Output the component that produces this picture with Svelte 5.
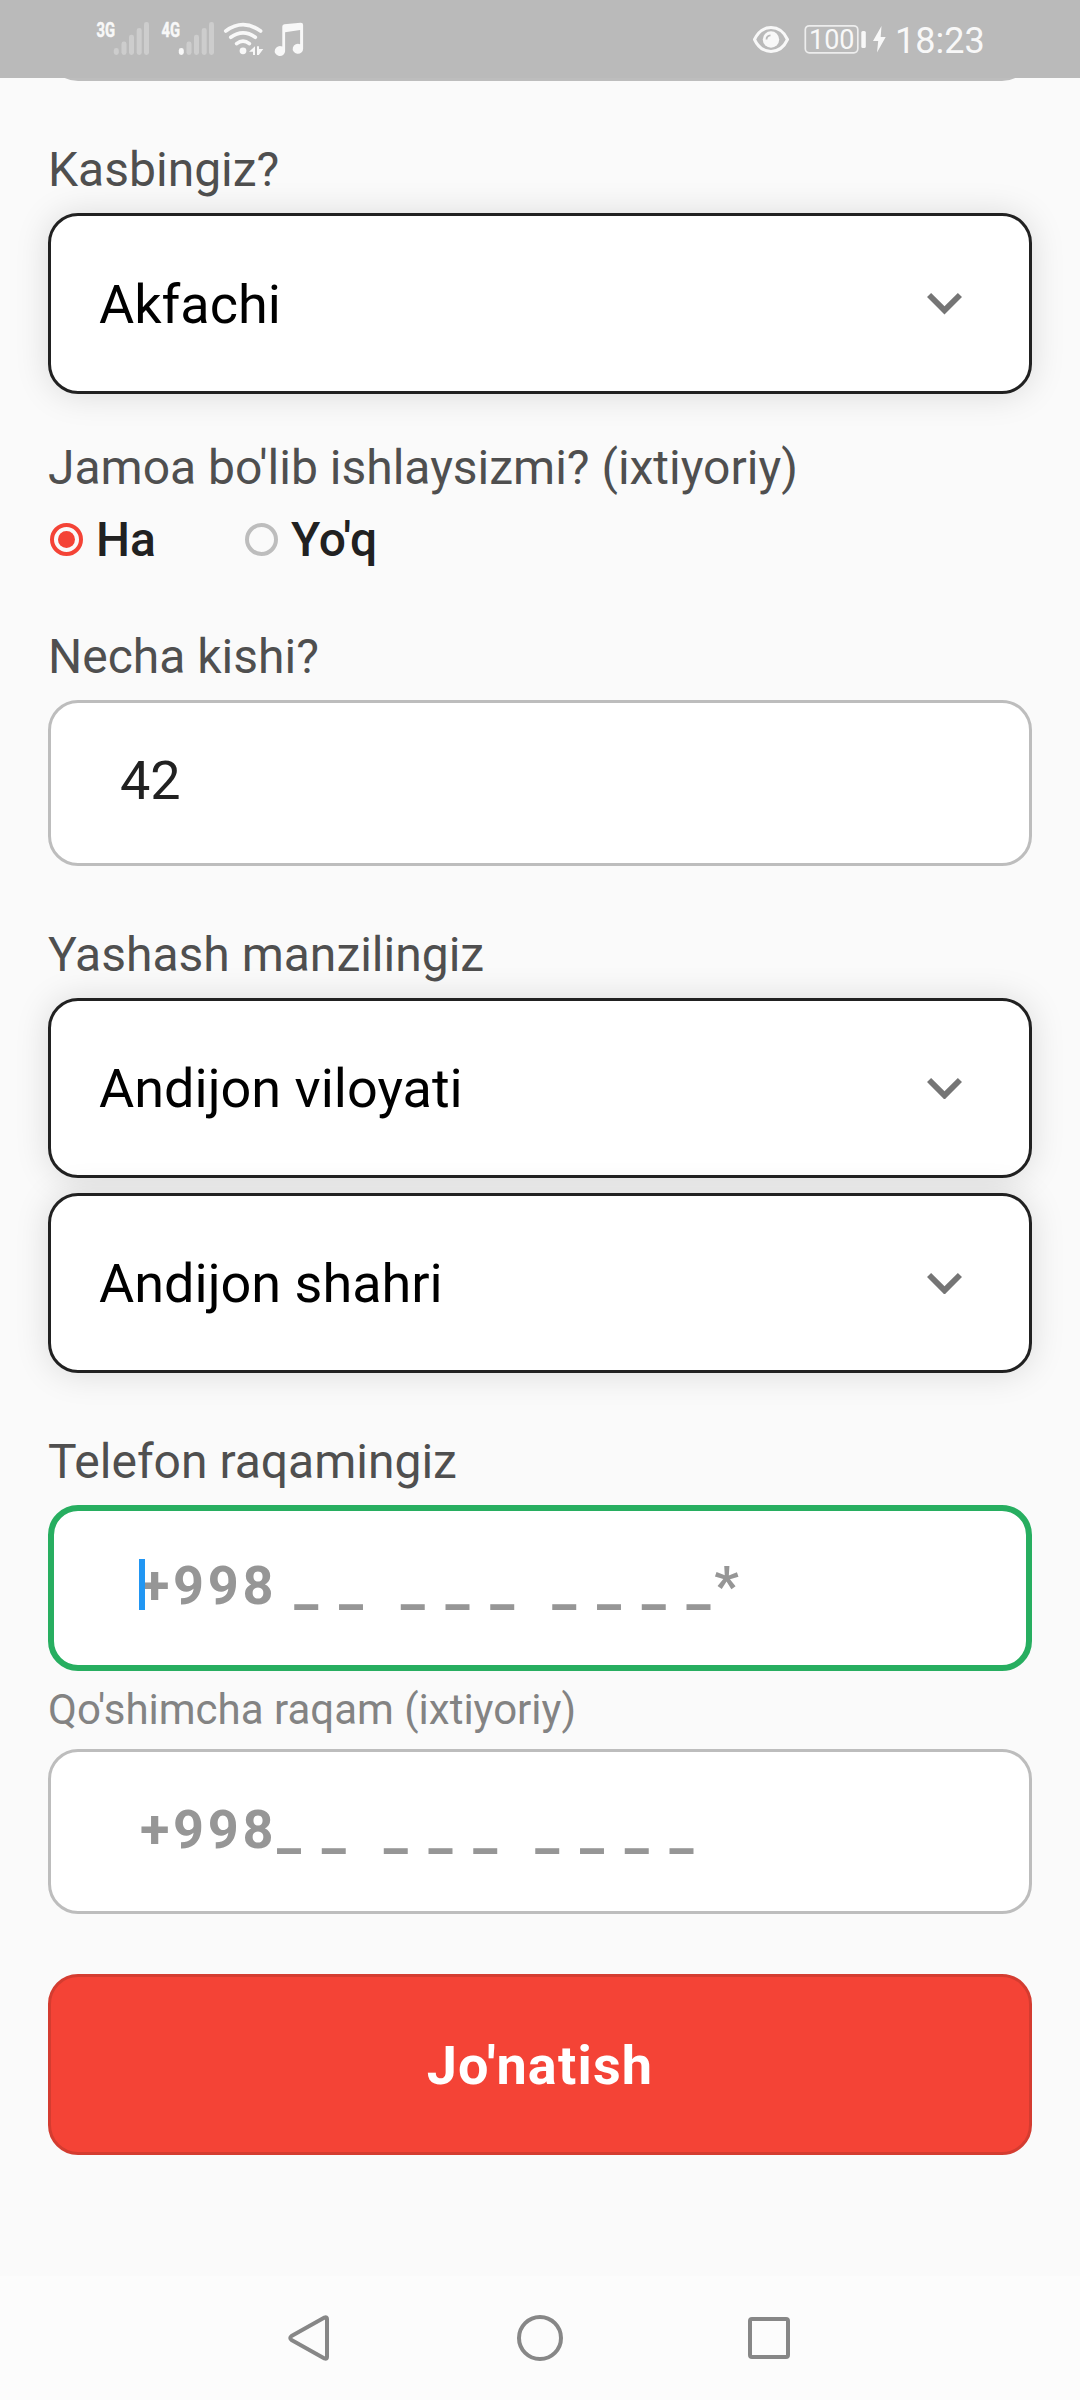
<script>
  const bars = [
    { x: 116.3, top: 48 },
    { x: 124, top: 41.5 },
    { x: 131.5, top: 34.7 },
    { x: 139.2, top: 28 },
    { x: 146.5, top: 22 }
  ];
  const signals = [
    { name: '3G', shift: 0, lit: false },
    { name: '4G', shift: 65, lit: true }
  ];
  let team = $state('ha');
</script>

{#snippet select(value)}
  <div class="field select">
    <span>{value}</span>
    <svg class="chevron" viewBox="6 8.59 12 7.41"><path d="M16.59 8.59 12 13.17 7.41 8.59 6 10l6 6 6-6z" /></svg>
  </div>
{/snippet}

<div class="screen">
  <header>
    <svg class="icons" viewBox="90 0 220 78">
      {#each signals as s}
        <g transform="translate({s.shift} 0)">
          <text class="net" x="96.5" y="37" textLength="18.5" lengthAdjust="spacingAndGlyphs">{s.name}</text>
          {#each bars as b, i}
            <rect class:lit={s.lit && i === 0} class="bar" x={b.x - 2.5} y={b.top} width="5" height={55 - b.top} rx="2.4" />
          {/each}
        </g>
      {/each}
      <g class="line wifi">
        <path d="M225.8 31Q243 18.4 260.6 31" />
        <path d="M230.8 37.3Q243 28.6 255.3 37.3" />
        <path d="M236.6 43.6Q243 38.6 249.4 43.6" />
      </g>
      <circle class="solid" cx="243" cy="50.8" r="3.4" />
      <path class="solid" d="M255 46.3V55h-2v-3.2h-4zM257 55v-8.7h2v2.7h4.3l-4.5 6z" />
      <path class="solid" d="M282.3 26.5q0-2 2-2.3l16.2-1.5q2.6-.2 2.6 2v24a5.2 5 0 1 1-3-4.4V30l-15 2.2v19a5.2 5 0 1 1-2.8-4.6z" />
    </svg>
    <svg class="icons" viewBox="750 0 138 78">
      <path class="line eye" d="M754.5 39.5C758 32 764 27.6 771 27.6s13 4.4 16.5 11.9C784 47 778 51.4 771 51.4S758 47 754.5 39.5z" />
      <circle class="solid" cx="771" cy="39.5" r="8.2" />
      <path class="glint" d="M766.5 39.5q0-4 4-4.2" />
      <rect class="cell" x="805.3" y="25.8" width="52.5" height="27" rx="4" />
      <text class="charge" x="809" y="49.3">100</text>
      <rect class="solid" x="861.3" y="31" width="4.5" height="17" rx="1.5" />
      <path class="solid" d="M881.5 26 873 41h5.2l-1.2 11.500L885.700 37h-5z" />
    </svg>
    <span class="time">18:23</span>
  </header>

  <main>
    <div class="field input above"></div>

    <div class="label job">Kasbingiz?</div>
    {@render select('Akfachi')}

    <div class="label team">Jamoa bo'lib ishlaysizmi? (ixtiyoriy)</div>
    <div class="radios">
      <button class="radio" class:on={team === 'ha'} onclick={() => (team = 'ha')}><i></i>Ha</button>
      <button class="radio" class:on={team === 'yoq'} onclick={() => (team = 'yoq')}><i></i>Yo'q</button>
    </div>

    <div class="label people">Necha kishi?</div>
    <div class="field input count">42</div>

    <div class="label section">Yashash manzilingiz</div>
    {@render select('Andijon viloyati')}
    {@render select('Andijon shahri')}

    <div class="label section">Telefon raqamingiz</div>
    <div class="field input phone focused"><span class="mask">+998 _ _&nbsp; _ _ _&nbsp; _ _ _ _*<b class="caret"></b></span></div>

    <div class="label extra">Qo'shimcha raqam (ixtiyoriy)</div>
    <div class="field input phone second"><span class="mask">+998_ _&nbsp; _ _ _&nbsp; _ _ _ _</span></div>

    <button class="submit">Jo'natish</button>
  </main>

  <nav>
    <svg viewBox="0 0 50 50"><path d="M39.500 4.500Q42 3.500 42 6V44Q42 46.500 39.500 45.500L6.500 27Q4 25 6.500 23z" /></svg>
    <svg viewBox="0 0 50 50"><circle cx="25" cy="25" r="21" /></svg>
    <svg viewBox="0 0 50 50"><rect x="6" y="6" width="38" height="38" rx="2" /></svg>
  </nav>
</div>

<style>
  :global(body) {
    background: #fafafa;
  }
  .screen {
    width: 1080px;
    height: 2400px;
    display: flex;
    flex-direction: column;
    background: #fafafa;
    font-family: Roboto, sans-serif;
    overflow: hidden;
  }
  button {
    font-family: inherit;
    margin: 0;
  }

  header {
    height: 78px;
    flex: none;
    display: flex;
    background: #bababa;
    padding-left: 90px;
    color: #f8f8f8;
  }
  .icons {
    height: 78px;
    flex: none;
  }
  .icons:first-child {
    width: 220px;
    margin-right: 440px;
  }
  .icons:nth-child(2) {
    width: 138px;
  }
  .net {
    font-size: 20.5px;
    font-weight: 700;
    fill: #f8f8f8;
    stroke: #f8f8f8;
    stroke-width: 0.5;
  }
  .bar {
    fill: #cdcdcd;
  }
  .solid,
  .bar.lit {
    fill: #f8f8f8;
  }
  .line {
    fill: none;
    stroke: #f8f8f8;
    stroke-linecap: round;
  }
  .wifi {
    stroke-width: 3.7;
  }
  .eye {
    stroke-width: 3;
    stroke-linejoin: round;
  }
  .glint {
    fill: none;
    stroke: #bababa;
    stroke-width: 1.8;
  }
  .cell {
    fill: none;
    stroke: #ededed;
    stroke-width: 1.7;
  }
  .charge {
    font-size: 27px;
    fill: #f8f8f8;
  }
  .time {
    font-size: 36px;
    line-height: 82px;
    margin-left: 7px;
  }

  main {
    height: 2198px;
    flex: none;
    box-sizing: border-box;
    padding: 0 48px;
    display: flex;
    flex-direction: column;
    overflow: hidden;
  }
  .label {
    font-size: 48px;
    line-height: 60px;
    height: 60px;
    flex: none;
    color: #4f4f4f;
    white-space: nowrap;
    margin-bottom: 13px;
  }
  .job {
    margin-top: 59px;
  }
  .team {
    margin-top: 44px;
    margin-bottom: 12px;
  }
  .people {
    margin-top: 57px;
    margin-bottom: 13px;
  }
  .section {
    margin-top: 59px;
  }
  .extra {
    font-size: 42px;
    line-height: 52px;
    height: 52px;
    margin-top: 13px;
    color: #838383;
  }

  .field {
    box-sizing: border-box;
    flex: none;
    display: flex;
    align-items: center;
    border-radius: 30px;
    background: #fff;
    font-size: 54px;
    white-space: nowrap;
  }
  .input {
    height: 166px;
    border: 3px solid #bdbdbd;
    padding: 0 0 5px 69px;
    color: #212121;
  }
  .above {
    margin-top: -163px;
  }
  .select {
    height: 181px;
    justify-content: space-between;
    border: 3px solid #212121;
    padding: 1px 67px 0 48px;
    color: #000;
    box-shadow: 0 1px 34px rgba(0, 0, 0, 0.13);
  }
  .section + .select {
    height: 180px;
  }
  .select + .select {
    height: 180px;
    margin-top: 15px;
  }
  .chevron {
    width: 35px;
    height: 21.600px;
    fill: #757575;
  }

  .radios {
    display: flex;
    height: 60px;
    flex: none;
    padding-left: 2px;
  }
  .radio {
    display: flex;
    align-items: center;
    width: 195px;
    padding: 0;
    border: 0;
    background: none;
    font-size: 48px;
    font-weight: 500;
    line-height: 60px;
    color: #212121;
    text-align: left;
  }
  .radio i {
    box-sizing: border-box;
    width: 33px;
    height: 33px;
    flex: none;
    margin: 0 13px 2px 0;
    border: 4px solid #bdbdbd;
    border-radius: 50%;
    display: grid;
    place-items: center;
  }
  .on i {
    border-color: #f44336;
  }
  .on i::after {
    content: '';
    width: 17px;
    height: 17px;
    border-radius: 50%;
    background: #f44336;
  }

  .phone {
    padding-left: 89px;
    font-weight: 700;
    color: #969696;
    letter-spacing: 3.670px;
  }
  .focused {
    border: 6px solid #27ae60;
    padding-left: 86px;
  }
  .second {
    height: 165px;
  }
  .mask {
    position: relative;
  }
  .caret {
    position: absolute;
    left: -1px;
    top: 5px;
    width: 6px;
    height: 51px;
    background: #2196f3;
  }

  .submit {
    height: 181px;
    flex: none;
    margin-top: 60px;
    padding: 2px 0 0;
    border: 3px solid #d43c30;
    border-radius: 30px;
    background: #f44336;
    color: #fff;
    font-size: 54px;
    font-weight: 700;
    letter-spacing: 1.200px;
  }

  nav {
    flex: 1;
    display: flex;
    justify-content: center;
    gap: 179px;
    padding-top: 37px;
    background: #fcfcfc;
  }
  nav svg {
    width: 50px;
    height: 50px;
    fill: none;
    stroke: #878787;
    stroke-width: 4;
    stroke-linejoin: round;
  }
  nav svg:first-child {
    margin: 0 1px 0 -1px;
  }
</style>
